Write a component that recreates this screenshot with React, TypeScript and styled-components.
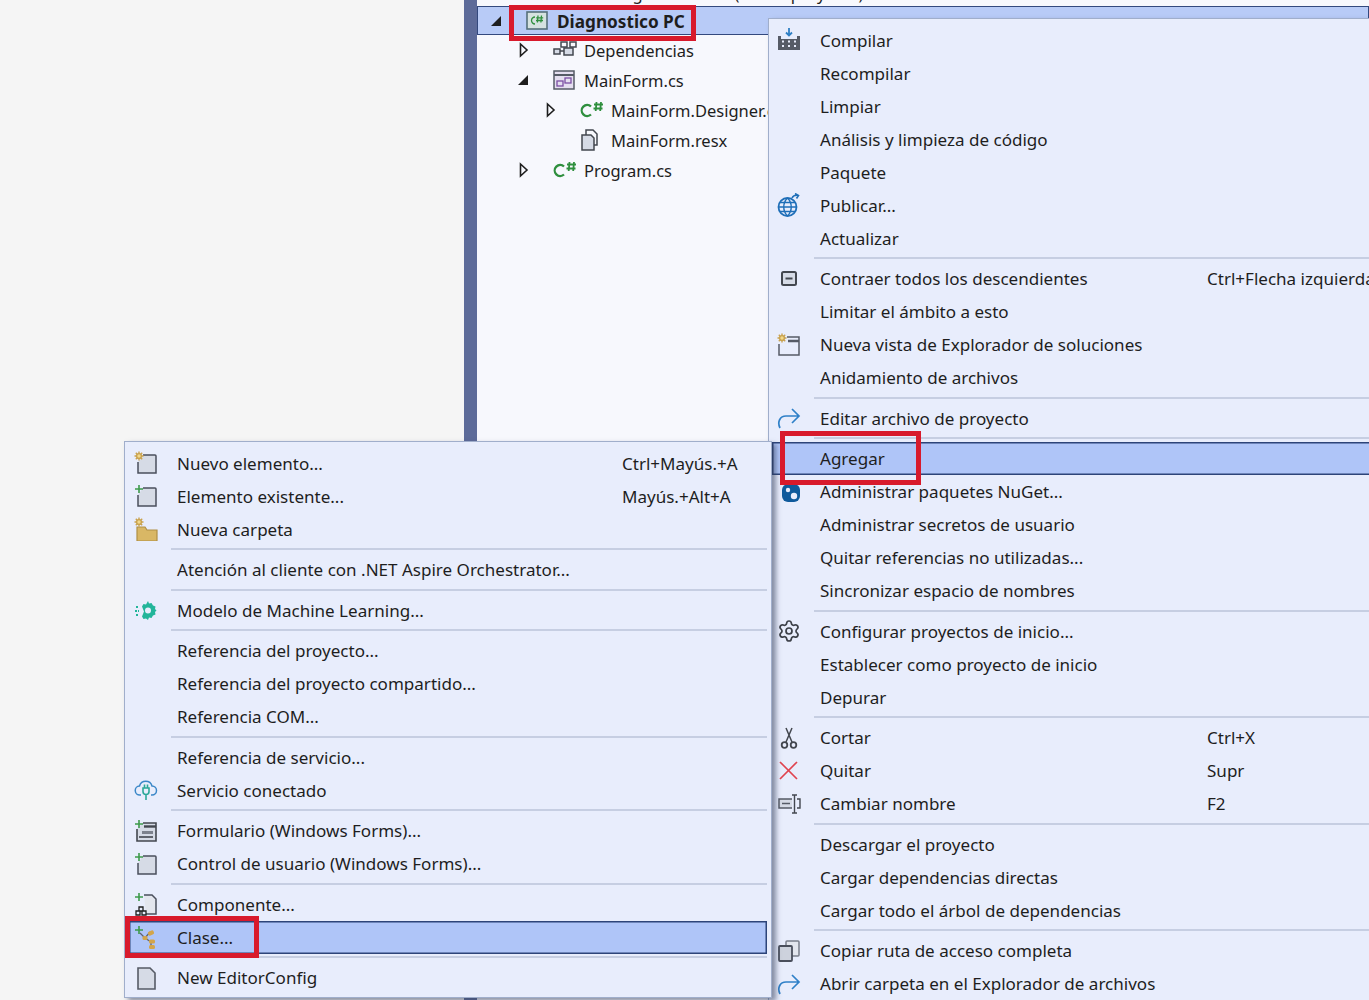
import React from 'react';
import styled, { createGlobalStyle } from 'styled-components';
import { Settings } from 'lucide-react';

const GlobalStyle = createGlobalStyle`
    html, body {
        margin: 0;
        padding: 0;
        background: #f5f5f5;
    }
`

const Page = styled.div`
    position: relative;
    display: grid;
    grid-template-columns: 464px 13px 1fr;
    width: 1369px;
    height: 1000px;
    overflow: hidden;
    background: #f5f5f5;
    font-family: "Noto Sans", sans-serif;
    font-size: 17.05px;
    color: #1e1e1e;
`
const Blank = styled.div``
const Strip = styled.div`
    background: #5d6b99;
`
const Tree = styled.div`
    background: #f7f8fd;
    font-size: 16.5px;
`
const SolutionRow = styled.div`
    display: flex;
    align-items: flex-end;
    height: 6px;
    padding-left: 53px;
    overflow: hidden;
    white-space: nowrap;
    line-height: 24px;
`
const TreeRow = styled.div<{ $level: number; $selected?: boolean }>`
    display: flex;
    align-items: center;
    height: 30px;
    box-sizing: border-box;
    padding-left: ${props => 10 + props.$level * 27}px;
    ${props => props.$selected && `
        height: 29px;
        background: #b8cbf7;
        border: 1px solid #33497e;
        font-size: 17.2px;
        font-weight: 700;
        padding-left: 9px;
        padding-top: 1px;
    `}
`
const Arrow = styled.span`
    display: flex;
    width: 20px;
    margin-right: 17px;
    justify-content: center;
`
const TreeIcon = styled.span`
    display: flex;
    width: 33px;
    padding-left: 2px;
    box-sizing: border-box;
`
const TreeLabel = styled.span`
    white-space: nowrap;
`
const Menu = styled.div<{ $left: number; $top: number; $width: number; $height: number; $z: number; $inset: number }>`
    position: absolute;
    left: ${props => props.$left}px;
    top: ${props => props.$top}px;
    width: ${props => props.$width}px;
    height: ${props => props.$height}px;
    z-index: ${props => props.$z};
    box-sizing: border-box;
    padding: 4.7px 4px 0 ${props => props.$inset}px;
    background: #e8edfc;
    border: 1px solid #a0aecb;
    box-shadow: 4px 3px 5px rgba(50, 60, 90, 0.55);
`
const Item = styled.div<{ $active?: boolean; $shortcutAt: number }>`
    display: grid;
    grid-template-columns: 48px ${props => props.$shortcutAt}px 1fr;
    align-items: center;
    height: 33px;
    box-sizing: border-box;
    white-space: nowrap;
    ${props => props.$active && `
        background: #afc5f8;
        box-shadow: inset 0 0 0 1.5px #2d4479;
    `}
`
const ItemIcon = styled.span`
    display: flex;
    justify-content: center;
    padding-right: 14px;
`
const Separator = styled.div`
    height: 2px;
    margin: 2.75px 0 2.75px 42px;
    background: #c6cee2;
`
const Marker = styled.div<{ $left: number; $top: number; $width: number; $height: number }>`
    position: absolute;
    left: ${props => props.$left}px;
    top: ${props => props.$top}px;
    width: ${props => props.$width}px;
    height: ${props => props.$height}px;
    z-index: 5;
    box-sizing: border-box;
    border: 5px solid #d81a2c;
`

const Svg: React.FC<{ children: React.ReactNode }> = ({ children }) => (
    <svg width="24" height="24" viewBox="0 0 24 24" fill="none">{children}</svg>
)

const Star = ({ x = 5, y = 5 }: { x?: number; y?: number }) => (
    <g stroke="#c9a24f" strokeWidth="1.4">
        <circle cx={x} cy={y} r="2.4" fill="#f3d98b" />
        <path d={`M${x} ${y - 4.5}v2M${x} ${y + 2.5}v2M${x - 4.5} ${y}h2M${x + 2.5} ${y}h2M${x - 3.2} ${y - 3.2}l1.4 1.4M${x + 1.8} ${y + 1.8}l1.4 1.4M${x + 3.2} ${y - 3.2}l-1.4 1.4M${x - 1.8} ${y + 1.8}l-1.4 1.4`} />
    </g>
)
const Plus = () => <path d="M5 1v8M1 5h8" stroke="#3d9a4b" strokeWidth="1.6" />
const Sheet = () => (
    <path d="M9 4h12a1 1 0 0 1 1 1v17H4V11" fill="#d6dbe6" stroke="#4a4f5c" strokeWidth="1.5" />
)

const CSharp = ({ color = '#2f8f3e' }: { color?: string }) => (
    <svg width="24" height="18" viewBox="0 0 24 18" fill="none">
        <path d="M11 5.500a5.500 5.500 0 1 0 0 8" stroke={color} strokeWidth="2.300" />
        <path d="M16.500 1l-.8 9M21 1l-.8 9M14 3.500h9M13.500 7.500h9" stroke={color} strokeWidth="1.800" />
    </svg>
)

const Redo = () => (
    <Svg>
        <path d="M3 22C0 16 3 10 9 10h13M15 3l7 7-7 7" stroke="#2f80c8" strokeWidth="1.700" />
    </Svg>
)

const icons: Record<string, React.ReactNode> = {
    build: (
        <Svg>
            <path d="M12 0v7M9 4.500l3 3 3-3" stroke="#2f7fc4" strokeWidth="1.800" />
            <path d="M1 8h3v3h16V8h3v14H1z" fill="#565b66" />
            <path d="M5 13.500h2M11 13.500h2M17 13.500h2M5 18h2M11 18h2M17 18h2" stroke="#e8edfc" strokeWidth="2" />
        </Svg>
    ),
    globe: (
        <Svg>
            <circle cx="10.500" cy="14" r="9" stroke="#1f6fb8" strokeWidth="1.800" />
            <path d="M1.500 14h18M3 9.500h15M3 18.500h15M10.500 5c-5 5-5 13 0 18M10.500 5c5 5 5 13 0 18" stroke="#1f6fb8" strokeWidth="1.400" />
            <path d="M15 5c1-2 3-3 6-2.600M18 .5l3.500 2-2 3" stroke="#1f6fb8" strokeWidth="1.600" />
        </Svg>
    ),
    collapse: (
        <Svg>
            <rect x="5" y="5" width="14" height="13" rx="1.500" fill="#d6dbe6" stroke="#43474f" strokeWidth="2" />
            <path d="M8.500 11.500h7" stroke="#43474f" strokeWidth="2" />
        </Svg>
    ),
    newView: (
        <Svg>
            <path d="M10 4h12v18H2v-11" fill="#e8edfc" stroke="#565b66" strokeWidth="1.500" />
            <path d="M11 8h11" stroke="#565b66" strokeWidth="2.500" />
            <Star />
        </Svg>
    ),
    redo: <Redo />,
    nuget: (
        <Svg>
            <rect x="5" y="4" width="18" height="18" rx="6" fill="#0f5a9c" />
            <circle cx="11" cy="10" r="2.200" fill="#e8edfc" />
            <circle cx="17" cy="16" r="3.200" fill="#e8edfc" />
        </Svg>
    ),
    gear: <Settings size={24} color="#3c4048" strokeWidth={1.7} />,
    cut: (
        <Svg>
            <circle cx="7.500" cy="19" r="2.800" stroke="#43474f" strokeWidth="1.800" />
            <circle cx="16.500" cy="19" r="2.800" stroke="#43474f" strokeWidth="1.800" />
            <path d="M8.800 16.500L15 2M15.200 16.500L9 2" stroke="#43474f" strokeWidth="1.500" />
        </Svg>
    ),
    remove: (
        <Svg>
            <path d="M3 3l17 17M20 3L3 20" stroke="#e0434f" strokeWidth="1.700" />
        </Svg>
    ),
    rename: (
        <Svg>
            <path d="M15 7H2v9h13" fill="#d6dbe6" stroke="#565b66" strokeWidth="1.500" />
            <path d="M5 11.500h8" stroke="#565b66" strokeWidth="1.500" />
            <path d="M15 3h5M15 21h5M17.500 3v18M20 7h3v9h-3" stroke="#43474f" strokeWidth="1.400" />
        </Svg>
    ),
    copy: (
        <Svg>
            <rect x="9" y="2" width="13" height="15" rx="1" fill="#e3e6ee" stroke="#7a7f8a" strokeWidth="1.500" />
            <rect x="2" y="7" width="13" height="15" rx="1" fill="#cdd2dd" stroke="#4a4f5c" strokeWidth="1.800" />
        </Svg>
    ),
    newItem: <Svg><Sheet /><Star /></Svg>,
    existing: <Svg><Sheet /><Plus /></Svg>,
    folder: (
        <Svg>
            <path d="M3 10h8l2 3h10v11H3z" fill="#d9b765" stroke="#b08f45" strokeWidth="1.200" />
            <Star />
        </Svg>
    ),
    ml: (
        <Svg>
            <path d="M14 3l1 2.500 2.500-.5 1.500 2.500 2.500 1-.5 2.500 1.500 1.500-1.500 1.500.5 2.500-2.500 1-1.500 2.500-2.500-.5-1 2.500-2-1.500-2.500 .5-1.500-2.500 2-5-2-5 1.500-2.500 2.500.5z" fill="#22b59a" />
            <circle cx="14" cy="12.500" r="3" fill="#e8edfc" />
            <path d="M2 9h3M1 13h4M2 17h3" stroke="#22b59a" strokeWidth="1.800" strokeDasharray="2 1" />
        </Svg>
    ),
    cloud: (
        <Svg>
            <path d="M7 17H6a4.500 4.500 0 0 1-.5-9 6.500 6.500 0 0 1 12.500 0 4.500 4.500 0 0 1 0 9h-1" stroke="#3a87c8" strokeWidth="1.500" />
            <path d="M9 10v3.500a3 3 0 0 0 6 0V10zM10.500 6.500V10M13.500 6.500V10M12 16.500V22" stroke="#2aa898" strokeWidth="1.600" />
        </Svg>
    ),
    form: (
        <Svg>
            <path d="M9 4h13v18H3v-12" fill="#d6dbe6" stroke="#43474f" strokeWidth="1.600" />
            <path d="M10 7.500h12" stroke="#43474f" strokeWidth="2.400" />
            <rect x="8" y="12" width="11" height="3" fill="#7d828d" />
            <path d="M5 18h14" stroke="#43474f" strokeWidth="1.600" />
            <Plus />
        </Svg>
    ),
    control: <Svg><Sheet /><Plus /></Svg>,
    component: (
        <Svg>
            <path d="M10 3h8l4 4v15H12" fill="#e3e6ee" stroke="#4a4f5c" strokeWidth="1.500" />
            <path d="M5 15h4v4H5zM2 19h4v4H2zM8 19h4v4H8z" fill="#e8edfc" stroke="#1e1e1e" strokeWidth="1.300" />
            <Plus />
        </Svg>
    ),
    classItem: (
        <Svg>
            <Plus />
            <path d="M6 8l5 5 5-6M11 13l6 4v5" stroke="#5f6270" strokeWidth="1.300" />
            <rect x="14" y="6" width="6" height="4" rx="1.500" fill="#d3a54a" transform="rotate(-25 17 8)" />
            <rect x="8.500" y="11" width="5" height="4" rx="1.500" fill="#d3a54a" />
            <rect x="15" y="14.500" width="6" height="4" rx="1.500" fill="#d3a54a" />
            <rect x="15" y="20" width="6" height="4" rx="1.500" fill="#d3a54a" />
        </Svg>
    ),
    editorConfig: (
        <Svg>
            <path d="M4 2h12l5 5v16H4z" fill="#d6dbe6" stroke="#565b66" strokeWidth="1.600" />
        </Svg>
    ),
}

type Entry = { label?: string; shortcut?: string; icon?: string; active?: boolean }

const sep: Entry = {}

const rightMenu: Entry[] = [
    { label: 'Compilar', icon: 'build' },
    { label: 'Recompilar' },
    { label: 'Limpiar' },
    { label: 'Análisis y limpieza de código' },
    { label: 'Paquete' },
    { label: 'Publicar...', icon: 'globe' },
    { label: 'Actualizar' },
    sep,
    { label: 'Contraer todos los descendientes', shortcut: 'Ctrl+Flecha izquierda', icon: 'collapse' },
    { label: 'Limitar el ámbito a esto' },
    { label: 'Nueva vista de Explorador de soluciones', icon: 'newView' },
    { label: 'Anidamiento de archivos' },
    sep,
    { label: 'Editar archivo de proyecto', icon: 'redo' },
    sep,
    { label: 'Agregar', active: true },
    { label: 'Administrar paquetes NuGet...', icon: 'nuget' },
    { label: 'Administrar secretos de usuario' },
    { label: 'Quitar referencias no utilizadas...' },
    { label: 'Sincronizar espacio de nombres' },
    sep,
    { label: 'Configurar proyectos de inicio...', icon: 'gear' },
    { label: 'Establecer como proyecto de inicio' },
    { label: 'Depurar' },
    sep,
    { label: 'Cortar', shortcut: 'Ctrl+X', icon: 'cut' },
    { label: 'Quitar', shortcut: 'Supr', icon: 'remove' },
    { label: 'Cambiar nombre', shortcut: 'F2', icon: 'rename' },
    sep,
    { label: 'Descargar el proyecto' },
    { label: 'Cargar dependencias directas' },
    { label: 'Cargar todo el árbol de dependencias' },
    sep,
    { label: 'Copiar ruta de acceso completa', icon: 'copy' },
    { label: 'Abrir carpeta en el Explorador de archivos', icon: 'redo' },
]

const leftMenu: Entry[] = [
    { label: 'Nuevo elemento...', shortcut: 'Ctrl+Mayús.+A', icon: 'newItem' },
    { label: 'Elemento existente...', shortcut: 'Mayús.+Alt+A', icon: 'existing' },
    { label: 'Nueva carpeta', icon: 'folder' },
    sep,
    { label: 'Atención al cliente con .NET Aspire Orchestrator...' },
    sep,
    { label: 'Modelo de Machine Learning...', icon: 'ml' },
    sep,
    { label: 'Referencia del proyecto...' },
    { label: 'Referencia del proyecto compartido...' },
    { label: 'Referencia COM...' },
    sep,
    { label: 'Referencia de servicio...' },
    { label: 'Servicio conectado', icon: 'cloud' },
    sep,
    { label: 'Formulario (Windows Forms)...', icon: 'form' },
    { label: 'Control de usuario (Windows Forms)...', icon: 'control' },
    sep,
    { label: 'Componente...', icon: 'component' },
    { label: 'Clase...', active: true, icon: 'classItem' },
    sep,
    { label: 'New EditorConfig', icon: 'editorConfig' },
]

const renderEntries = (entries: Entry[], shortcutAt: number) =>
    entries.map((entry, i) =>
        entry.label ? (
            <Item key={i} $active={entry.active} $shortcutAt={shortcutAt}>
                <ItemIcon>{entry.icon && icons[entry.icon]}</ItemIcon>
                <span>{entry.label}</span>
                <span>{entry.shortcut}</span>
            </Item>
        ) : (
            <Separator key={i} />
        )
    )

const Open = () => (
    <svg width="12" height="12" viewBox="0 0 12 12"><path d="M10 1v10H0z" fill="#1e1e1e" /></svg>
)
const Closed = () => (
    <svg width="12" height="16" viewBox="0 0 12 16" fill="none"><path d="M2.500 2l6.500 6-6.500 6z" stroke="#1e1e1e" strokeWidth="1.600" /></svg>
)

const App: React.FC = () => (
    <Page>
        <GlobalStyle />
        <Blank />
        <Strip />
        <Tree>
            <SolutionRow>Solución "Diagnostico PC" (1 de 1 proyecto)</SolutionRow>
            <TreeRow $level={0} $selected>
                <Arrow><Open /></Arrow>
                <TreeIcon>
                    <svg width="22" height="20" viewBox="0 0 22 20" fill="none">
                        <rect x="1" y="1" width="20" height="17" fill="#d5e2e0" stroke="#55707a" strokeWidth="1.600" />
                        <path d="M9 6a3.300 3.300 0 1 0 0 7M12 4.500l-.6 7M15.500 4.500l-.6 7M10.200 6.800h7M10 9.500h7" stroke="#2f8f3e" strokeWidth="1.300" />
                    </svg>
                </TreeIcon>
                <TreeLabel>Diagnostico PC</TreeLabel>
            </TreeRow>
            <TreeRow $level={1}>
                <Arrow><Closed /></Arrow>
                <TreeIcon>
                    <svg width="24" height="20" viewBox="0 0 24 20" fill="none" stroke="#43474f" strokeWidth="1.500">
                        <rect x="1" y="9" width="6" height="5" fill="#d6dbe6" />
                        <rect x="11" y="8" width="9" height="7" fill="#d6dbe6" />
                        <rect x="8" y="2" width="6" height="5" />
                        <rect x="17" y="2" width="6" height="5" />
                        <path d="M7 11h4" />
                    </svg>
                </TreeIcon>
                <TreeLabel>Dependencias</TreeLabel>
            </TreeRow>
            <TreeRow $level={1}>
                <Arrow><Open /></Arrow>
                <TreeIcon>
                    <svg width="23" height="22" viewBox="0 0 23 22" fill="none">
                        <rect x="1" y="2" width="20" height="18" fill="#e5dff0" stroke="#565b66" strokeWidth="1.500" />
                        <path d="M1 6h20" stroke="#565b66" strokeWidth="2" />
                        <rect x="4" y="12" width="6" height="5" stroke="#7b4fa3" strokeWidth="1.300" />
                        <rect x="12" y="9" width="6" height="5" stroke="#7b4fa3" strokeWidth="1.300" />
                    </svg>
                </TreeIcon>
                <TreeLabel>MainForm.cs</TreeLabel>
            </TreeRow>
            <TreeRow $level={2}>
                <Arrow><Closed /></Arrow>
                <TreeIcon><CSharp /></TreeIcon>
                <TreeLabel>MainForm.Designer.cs</TreeLabel>
            </TreeRow>
            <TreeRow $level={2}>
                <Arrow />
                <TreeIcon>
                    <svg width="20" height="22" viewBox="0 0 20 22" fill="none">
                        <path d="M6 1h7l4 4v11H6z" stroke="#43474f" strokeWidth="1.500" />
                        <path d="M2 6h9l3 3v12H2z" fill="#d6dbe6" stroke="#43474f" strokeWidth="1.500" />
                    </svg>
                </TreeIcon>
                <TreeLabel>MainForm.resx</TreeLabel>
            </TreeRow>
            <TreeRow $level={1}>
                <Arrow><Closed /></Arrow>
                <TreeIcon><CSharp /></TreeIcon>
                <TreeLabel>Program.cs</TreeLabel>
            </TreeRow>
        </Tree>

        <Menu $left={768} $top={18} $width={640} $height={1000} $z={1} $inset={3}>
            {renderEntries(rightMenu, 387)}
        </Menu>
        <Menu $left={124} $top={441} $width={648} $height={557} $z={2} $inset={4}>
            {renderEntries(leftMenu, 445)}
        </Menu>

        <Marker $left={509} $top={5} $width={187} $height={36} />
        <Marker $left={780} $top={431} $width={141} $height={54} />
        <Marker $left={125} $top={916} $width={134} $height={42} />
    </Page>
)

export default App
